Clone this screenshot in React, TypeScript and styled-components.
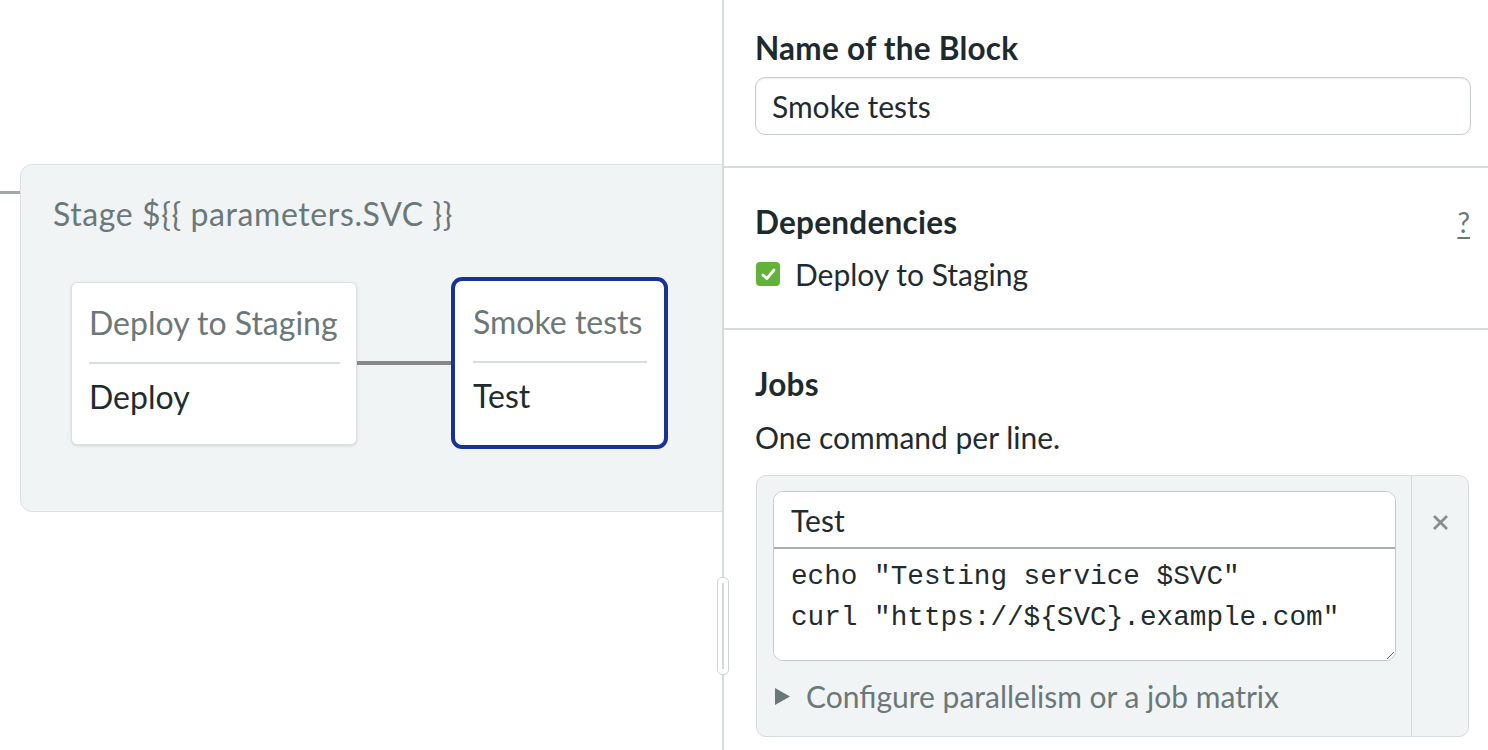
import React from 'react';
import styled, { createGlobalStyle } from 'styled-components';

const GlobalStyle = createGlobalStyle`
  html, body { margin: 0; padding: 0; background: #ffffff; }
  body { font-family: Lato, "Noto Sans", sans-serif; color: #1f2c2f; }
  * { box-sizing: border-box; }
`;

const Page = styled.div`
  position: relative;
  display: flex;
  width: 1488px;
  height: 750px;
  overflow: hidden;
  background: #ffffff;
`;

/* ---------- Canvas (left) ---------- */

const Canvas = styled.main`
  flex: none;
  width: 722px;
  height: 100%;
  overflow: hidden;
  padding-top: 164px;
`;

const StageRow = styled.div`
  display: flex;
  align-items: flex-start;
  width: 820px;
`;

const EdgeStub = styled.div`
  flex: none;
  width: 20px;
  height: 3px;
  margin-top: 27px;
  background: #9ea9a9;
`;

const Stage = styled.section`
  flex: none;
  width: 780px;
  height: 348px;
  padding: 31px 0 0 32px;
  background: #f1f4f5;
  border: 1px solid #dce1e2;
  border-radius: 12px;
`;

const StageTitle = styled.h2`
  margin: 0;
  font-size: 32px;
  letter-spacing: 0.6px;
  line-height: 36px;
  font-weight: 400;
  color: #6b7878;
  white-space: nowrap;
`;

const BlocksRow = styled.div`
  display: flex;
  align-items: center;
  margin: 45px 0 0 18px;
`;

const Block = styled.div<{ $selected?: boolean; $width: number }>`
  flex: none;
  width: ${(p) => p.$width}px;
  background: #ffffff;
  border: ${(p) => (p.$selected ? '4px solid #17339a' : '1px solid #dadfdf')};
  border-radius: ${(p) => (p.$selected ? 11 : 6)}px;
  box-shadow: ${(p) => (p.$selected ? 'none' : '0 1px 3px rgba(0, 0, 0, 0.13)')};
  padding: ${(p) => (p.$selected ? '21px 17px 29px 18px' : '20px 16px 27px 17px')};
`;

const BlockTitle = styled.div`
  font-size: 32px;
  line-height: 40px;
  color: #6b7878;
  white-space: nowrap;
  padding-bottom: 19px;
  border-bottom: 2px solid #d9dede;
`;

const BlockJob = styled.div`
  margin-top: 13px;
  font-size: 32px;
  line-height: 40px;
  color: #1f2c2f;
  white-space: nowrap;
`;

const Connector = styled.div`
  flex: none;
  width: 94px;
  height: 4px;
  background: #878787;
`;

/* ---------- Side panel (right) ---------- */

const Panel = styled.aside`
  flex: none;
  width: 766px;
  height: 100%;
  border-left: 2px solid #d6dcdc;
`;

const Section = styled.section<{ $pt: number; $pb: number; $last?: boolean }>`
  padding: ${(p) => p.$pt}px 17px ${(p) => p.$pb}px 31px;
  border-bottom: ${(p) => (p.$last ? 'none' : '2px solid #d6dcdc')};
`;

const HeaderRow = styled.div`
  display: flex;
  align-items: center;
  justify-content: space-between;
`;

const Heading = styled.h3`
  margin: 0;
  font-size: 31.5px;
  letter-spacing: 0.25px;
  line-height: 36px;
  font-weight: 700;
  color: #1d2b2e;
`;

const HelpLink = styled.a`
  font-size: 28px;
  line-height: 36px;
  color: #6b7878;
  text-decoration: underline;
  text-underline-offset: 4px;
  margin-right: 1px;
`;

const TextField = styled.input`
  display: block;
  width: 100%;
  height: 58px;
  margin-top: 11px;
  padding: 0 16px;
  font-family: Lato, "Noto Sans", sans-serif;
  font-size: 30px;
  color: #1f2c2f;
  background: #ffffff;
  border: 1px solid #c7cccc;
  border-radius: 10px;
  box-shadow: inset 0 1px 2px rgba(0, 0, 0, 0.08);
  outline: none;
`;

const CheckRow = styled.label`
  display: flex;
  align-items: center;
  gap: 15px;
  margin-top: 16px;
  padding-left: 1px;
  font-size: 30px;
  line-height: 36px;
  color: #1f2c2f;
`;

const CheckBox = styled.span`
  flex: none;
  display: flex;
  align-items: center;
  justify-content: center;
  width: 24px;
  height: 24px;
  border-radius: 4px;
  background: #60b338;
`;

const Description = styled.p`
  margin: 17px 0 0;
  font-size: 30px;
  line-height: 36px;
  color: #1f2c2f;
`;

const JobCard = styled.div`
  display: flex;
  height: 262px;
  margin: 20px 2px 0 1px;
  background: #f1f4f5;
  border: 1px solid #d6dcdc;
  border-radius: 10px;
`;

const JobMain = styled.div`
  flex: 1;
  padding: 15px 15px 0 16px;
`;

const JobEditor = styled.div`
  background: #ffffff;
  border: 1px solid #c5caca;
  border-radius: 10px;
  overflow: hidden;
`;

const JobName = styled.input`
  display: block;
  width: 100%;
  height: 57px;
  padding: 0 17px;
  font-family: Lato, "Noto Sans", sans-serif;
  font-size: 30px;
  color: #1f2c2f;
  border: none;
  border-bottom: 2px solid #a9b0b0;
  outline: none;
  background: #ffffff;
`;

const Commands = styled.textarea`
  display: block;
  width: 100%;
  height: 111px;
  padding: 7px 17px 0;
  font-family: "Liberation Mono", "DejaVu Sans Mono", monospace;
  font-size: 27.7px;
  line-height: 41px;
  color: #1f2c2f;
  border: none;
  outline: none;
  resize: vertical;
  background: #ffffff;
  overflow: hidden;
`;

const Disclosure = styled.div`
  display: flex;
  align-items: center;
  gap: 16px;
  margin-top: 17px;
  padding-left: 2px;
  font-size: 30px;
  line-height: 36px;
  color: #6b7878;
`;

const JobActions = styled.div`
  flex: none;
  width: 57px;
  display: flex;
  justify-content: center;
  padding-top: 38px;
  border-left: 1px solid #d6dcdc;
`;

const SplitHandle = styled.div`
  position: absolute;
  left: 717px;
  top: 577px;
  width: 12px;
  height: 98px;
  background: #ffffff;
  border: 1px solid #cfd5d5;
  border-radius: 5px;
  &::after {
    content: '';
    position: absolute;
    left: 4px;
    top: 5px;
    bottom: 5px;
    width: 2px;
    background: #d3d9d9;
  }
`;

export default function App() {
  return (
    <>
      <GlobalStyle />
      <Page>
        <Canvas>
          <StageRow>
            <EdgeStub />
            <Stage>
              <StageTitle>Stage ${'{{'} parameters.SVC {'}}'}</StageTitle>
              <BlocksRow>
                <Block $width={286}>
                  <BlockTitle>Deploy to Staging</BlockTitle>
                  <BlockJob>Deploy</BlockJob>
                </Block>
                <Connector />
                <Block $selected $width={217}>
                  <BlockTitle>Smoke tests</BlockTitle>
                  <BlockJob>Test</BlockJob>
                </Block>
              </BlocksRow>
            </Stage>
          </StageRow>
        </Canvas>

        <Panel>
          <Section $pt={30} $pb={31}>
            <Heading>Name of the Block</Heading>
            <TextField defaultValue="Smoke tests" />
          </Section>

          <Section $pt={36} $pb={36}>
            <HeaderRow>
              <Heading>Dependencies</Heading>
              <HelpLink>?</HelpLink>
            </HeaderRow>
            <CheckRow>
              <CheckBox>
                <svg width="15" height="13" viewBox="0 0 15 13">
                  <path d="M2 7 L5.8 10.6 L13 2" fill="none" stroke="#ffffff" strokeWidth="2.8" strokeLinecap="round" strokeLinejoin="round" />
                </svg>
              </CheckBox>
              Deploy to Staging
            </CheckRow>
          </Section>

          <Section $pt={36} $pb={0} $last>
            <Heading>Jobs</Heading>
            <Description>One command per line.</Description>
            <JobCard>
              <JobMain>
                <JobEditor>
                  <JobName defaultValue="Test" />
                  <Commands
                    spellCheck={false}
                    defaultValue={'echo "Testing service $SVC"\ncurl "https://${SVC}.example.com"'}
                  />
                </JobEditor>
                <Disclosure>
                  <svg width="15" height="17" viewBox="0 0 15 17">
                    <path d="M0 0 L15 8.5 L0 17 Z" fill="#6b7878" />
                  </svg>
                  Configure parallelism or a job matrix
                </Disclosure>
              </JobMain>
              <JobActions>
                <svg width="17" height="17" viewBox="0 0 17 17">
                  <path d="M2 2 L15 15 M15 2 L2 15" stroke="#888d8d" strokeWidth="2.8" strokeLinecap="butt" />
                </svg>
              </JobActions>
            </JobCard>
          </Section>
        </Panel>

        <SplitHandle />
      </Page>
    </>
  );
}
